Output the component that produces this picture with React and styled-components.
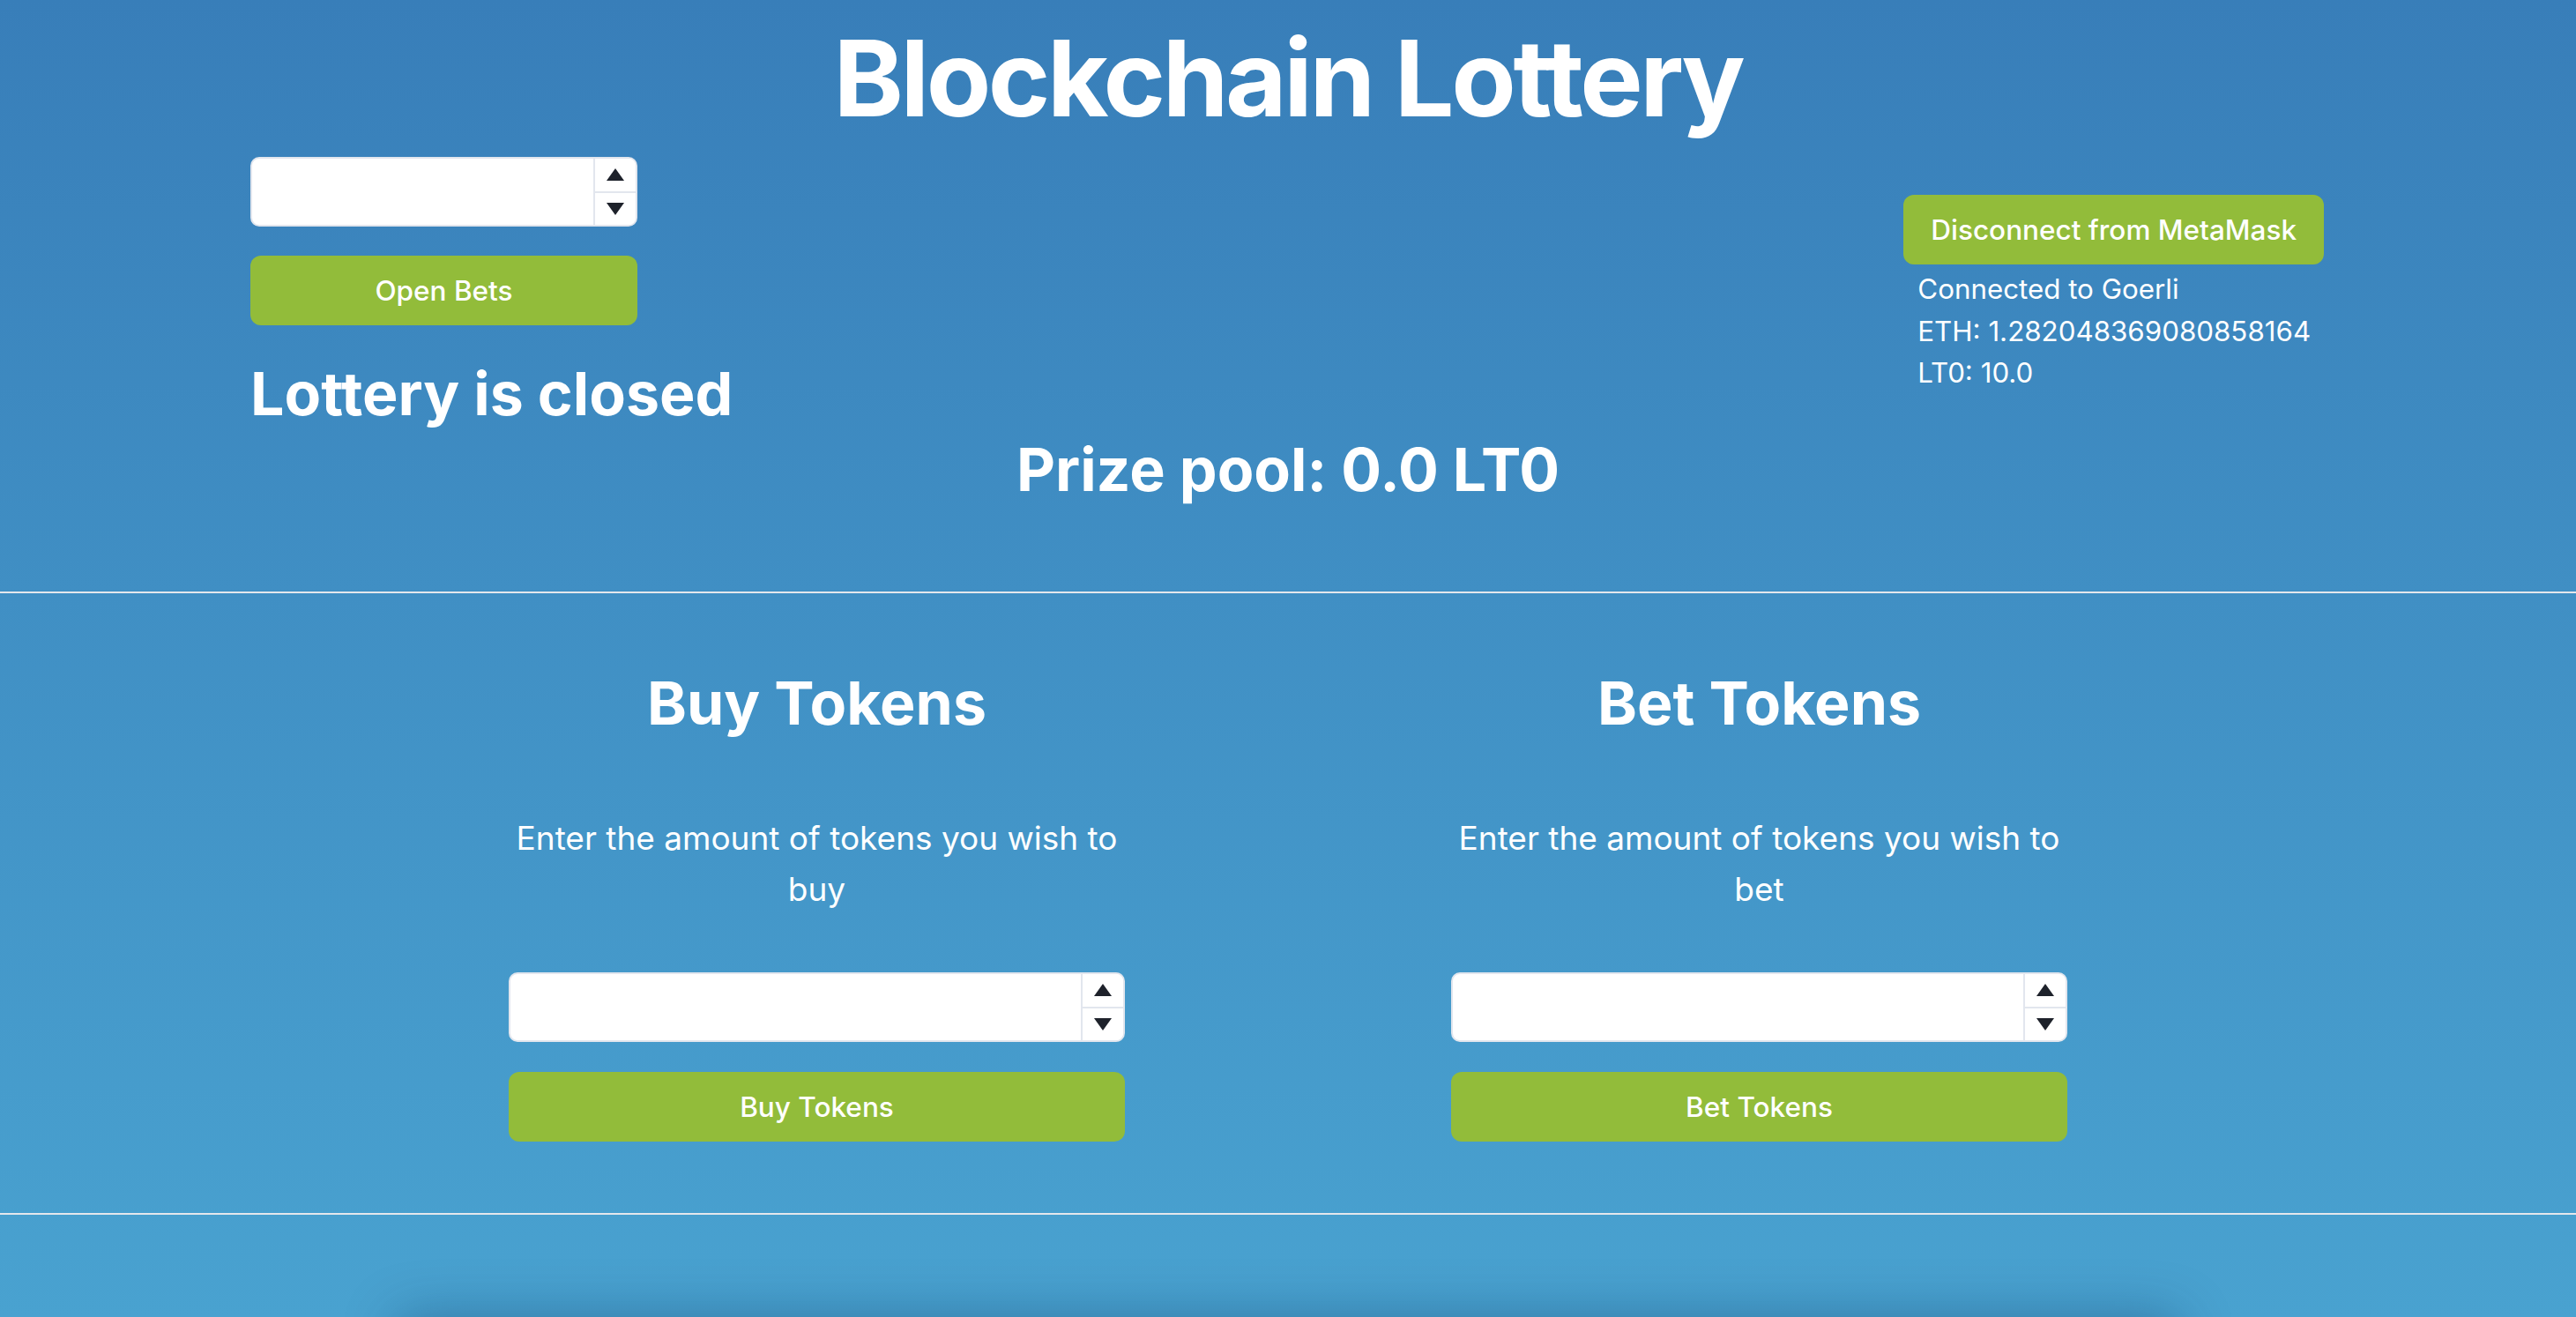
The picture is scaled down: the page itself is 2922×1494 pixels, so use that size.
import React, { useState } from 'react';
import styled, { createGlobalStyle } from 'styled-components';

const GlobalStyle = createGlobalStyle`
  html, body {
    margin: 0;
    padding: 0;
  }
  body {
    font-family: Inter, "Noto Sans", sans-serif;
    color: #fff;
    background: linear-gradient(180deg, #387EB9 0%, #408FC4 45%, #49A2D0 100%) fixed;
    min-height: 100vh;
  }
`;

const Page = styled.div`
  display: flex;
  flex-direction: column;
`;

const TopSection = styled.section`
  display: flex;
  flex-direction: column;
  padding: 16px 0 98px;
`;

const Title = styled.h1`
  margin: 0;
  text-align: center;
  font-size: 120px;
  line-height: 145px;
  font-weight: 700;
  letter-spacing: -3.4px;
`;

const TopRow = styled.div`
  display: flex;
  justify-content: space-between;
  align-items: flex-start;
  padding: 0 286px 0 284px;
  margin-top: 17px;
`;

const AdminColumn = styled.div`
  width: 439px;
  display: flex;
  flex-direction: column;
`;

const WalletColumn = styled.div`
  padding-top: 43px;
  display: flex;
  flex-direction: column;
  align-items: flex-start;
`;

const WalletInfo = styled.div`
  padding-left: 16px;
  padding-top: 5px;
  font-size: 31.3px;
  line-height: 47.5px;
  font-weight: 400;
`;

const BigHeading = styled.h2`
  margin: ${({ $gap }) => $gap || '0'};
  font-size: 68px;
  line-height: 82px;
  font-weight: 700;
  text-align: ${({ $center }) => ($center ? 'center' : 'left')};
  white-space: nowrap;
`;

const Field = styled.div`
  display: flex;
  height: 79px;
  box-sizing: border-box;
  border: 2px solid #E2E6EE;
  border-radius: 10px;
  background: #fff;
  overflow: hidden;
`;

const FieldInput = styled.input`
  flex: 1;
  min-width: 0;
  border: none;
  outline: none;
  padding: 0 20px;
  font-family: Inter, sans-serif;
  font-size: 30px;
  color: #1E222B;
  background: transparent;
  -moz-appearance: textfield;

  &::-webkit-inner-spin-button,
  &::-webkit-outer-spin-button {
    -webkit-appearance: none;
    margin: 0;
  }
`;

const Spinner = styled.div`
  width: 46px;
  display: flex;
  flex-direction: column;
  border-left: 2px solid #E2E6EE;
`;

const SpinHalf = styled.button`
  flex: 1;
  display: flex;
  align-items: center;
  justify-content: center;
  padding: 0;
  border: none;
  background: #fff;
  cursor: pointer;
  border-top: ${({ $down }) => ($down ? '2px solid #E2E6EE' : 'none')};

  &::after {
    content: '';
    width: 0;
    height: 0;
    border-left: 10px solid transparent;
    border-right: 10px solid transparent;
    ${({ $down }) => ($down
      ? 'border-top: 14px solid #1E222B;'
      : 'border-bottom: 14px solid #1E222B;')}
  }
`;

const GreenButton = styled.button`
  width: ${({ $fit }) => ($fit ? 'auto' : '100%')};
  height: 79px;
  margin-top: ${({ $top }) => $top || '0'};
  padding: 0 31px;
  border: none;
  border-radius: 12px;
  background: #92BC3A;
  color: #fff;
  font-family: Inter, sans-serif;
  font-size: 31.5px;
  font-weight: 500;
  cursor: pointer;
  white-space: nowrap;
`;

const Divider = styled.hr`
  width: 100%;
  margin: 0;
  border: none;
  border-top: 2px solid #E4E7EC;
`;

const TokenSection = styled.section`
  display: flex;
  justify-content: center;
  gap: 370px;
  padding: 83px 0 81px;
`;

const TokenPanel = styled.div`
  width: 699px;
  display: flex;
  flex-direction: column;
`;

const PanelText = styled.p`
  margin: 84px 0 0;
  text-align: center;
  font-size: 37px;
  line-height: 58px;
  font-weight: 400;
`;

const ResultsCard = styled.div`
  width: 2020px;
  height: 320px;
  margin: 116px auto 0;
  border-radius: 12px;
  background: #4AA3D2;
  box-shadow: 0 0 60px rgba(10, 40, 80, 0.35);
`;

function NumberField({ top }) {
  const [value, setValue] = useState('');
  const step = (d) => setValue((v) => String((Number(v) || 0) + d));
  return (
    <Field style={top ? { marginTop: top } : undefined}>
      <FieldInput type="number" value={value} onChange={(e) => setValue(e.target.value)} />
      <Spinner>
        <SpinHalf aria-label="increase" onClick={() => step(1)} />
        <SpinHalf $down aria-label="decrease" onClick={() => step(-1)} />
      </Spinner>
    </Field>
  );
}

function TokenBox({ title, verb }) {
  return (
    <TokenPanel>
      <BigHeading $center>{title}</BigHeading>
      <PanelText>Enter the amount of tokens you wish to {verb}</PanelText>
      <NumberField top="65px" />
      <GreenButton $top="34px">{title}</GreenButton>
    </TokenPanel>
  );
}

export default function App() {
  return (
    <Page>
      <GlobalStyle />
      <TopSection>
        <Title>Blockchain Lottery</Title>
        <TopRow>
          <AdminColumn>
            <NumberField />
            <GreenButton $top="33px">Open Bets</GreenButton>
            <BigHeading $gap="36px 0 0">Lottery is closed</BigHeading>
          </AdminColumn>
          <WalletColumn>
            <GreenButton $fit>Disconnect from MetaMask</GreenButton>
            <WalletInfo>
              <div>Connected to Goerli</div>
              <div>ETH: 1.282048369080858164</div>
              <div>LT0: 10.0</div>
            </WalletInfo>
          </WalletColumn>
        </TopRow>
        <BigHeading $center $gap="4px 0 0">Prize pool: 0.0 LT0</BigHeading>
      </TopSection>
      <Divider />
      <TokenSection>
        <TokenBox title="Buy Tokens" verb="buy" />
        <TokenBox title="Bet Tokens" verb="bet" />
      </TokenSection>
      <Divider />
      <ResultsCard />
    </Page>
  );
}
